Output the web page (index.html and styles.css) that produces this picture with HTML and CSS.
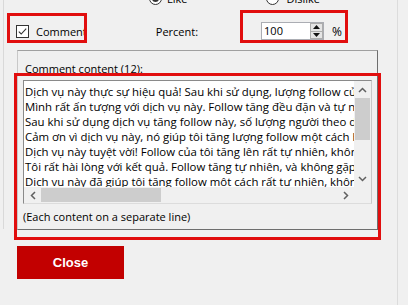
FILE: index.html
```html
<!DOCTYPE html>
<html lang="vi">
<head>
<meta charset="utf-8">
<title>Comment settings</title>
<link rel="stylesheet" href="styles.css">
</head>
<body>
<div class="window">
  <div class="upper">
    <div class="radio-row">
      <span class="radio checked"></span><span class="radio-label">Like</span>
      <span class="radio second"></span><span class="radio-label">Dislike</span>
    </div>
    <div class="settings-row">
      <span class="checkbox">
        <svg width="13" height="13" viewBox="0 0 13 13"><rect x="0.5" y="0.5" width="12" height="12" fill="#fff" stroke="#333"/><polyline points="2.8,6.6 5.2,9 10.2,3.6" fill="none" stroke="#333" stroke-width="1.1"/></svg>
      </span>
      <span class="check-label">Comment</span>
      <span class="percent-label">Percent:</span>
      <span class="spin">
        <span class="spin-value">100</span>
        <span class="spin-buttons">
          <span class="spin-btn"><svg width="7" height="4" viewBox="0 0 7 4"><polygon points="0,4 3.5,0 7,4" fill="#111"/></svg></span>
          <span class="spin-btn"><svg width="7" height="4" viewBox="0 0 7 4"><polygon points="0,0 3.5,4 7,0" fill="#111"/></svg></span>
        </span>
      </span>
      <span class="percent-sign">%</span>
    </div>
    <div class="group">
      <div class="group-label">Comment content (12):</div>
      <div class="textbox">
        <div class="text-view">
          <div class="lines">
            <div>Dịch vụ này thực sự hiệu quả! Sau khi sử dụng, lượng follow của tôi tăng lên đáng kể.</div>
            <div>Mình rất ấn tượng với dịch vụ này. Follow tăng đều đặn và tự nhiên, rất đáng tiền.</div>
            <div>Sau khi sử dụng dịch vụ tăng follow này, số lượng người theo dõi của tôi tăng nhanh.</div>
            <div>Cảm ơn vì dịch vụ này, nó giúp tôi tăng lượng follow một cách hiệu quả và an toàn.</div>
            <div>Dịch vụ này tuyệt vời! Follow của tôi tăng lên rất tự nhiên, không có dấu hiệu bất thường.</div>
            <div>Tôi rất hài lòng với kết quả. Follow tăng tự nhiên, và không gặp bất kỳ vấn đề gì.</div>
            <div>Dịch vụ này đã giúp tôi tăng follow một cách rất tự nhiên, không bị tụt giảm.</div>
            <div>Tốc độ tăng follow rất nhanh, hỗ trợ nhiệt tình, tôi sẽ tiếp tục ủng hộ.</div>
            <div>Giá cả hợp lý, follow tăng ổn định, tài khoản của tôi trông uy tín hơn hẳn.</div>
            <div>Lần đầu dùng thử nhưng kết quả vượt ngoài mong đợi, cảm ơn đội ngũ hỗ trợ.</div>
            <div>Follow thật, tương tác tốt, tôi sẽ giới thiệu dịch vụ này cho bạn bè.</div>
            <div>Dịch vụ chuyên nghiệp, giao hàng đúng hẹn và follow không bị tụt.</div>
          </div>
          <div class="vscroll">
            <span class="arrow"><svg width="9" height="6" viewBox="0 0 9 6"><polyline points="1,5 4.5,1.5 8,5" fill="none" stroke="#606060" stroke-width="1.5"/></svg></span>
            <span class="vtrack"><span class="vthumb"></span></span>
            <span class="arrow"><svg width="9" height="6" viewBox="0 0 9 6"><polyline points="1,1 4.5,4.5 8,1" fill="none" stroke="#606060" stroke-width="1.5"/></svg></span>
          </div>
        </div>
        <div class="hscroll">
          <span class="arrow"><svg width="6" height="9" viewBox="0 0 6 9"><polyline points="5,1 1.5,4.5 5,8" fill="none" stroke="#606060" stroke-width="1.5"/></svg></span>
          <span class="htrack"><span class="hthumb"></span></span>
          <span class="arrow"><svg width="6" height="9" viewBox="0 0 6 9"><polyline points="1,1 4.5,4.5 1,8" fill="none" stroke="#606060" stroke-width="1.5"/></svg></span>
          <span class="corner"></span>
        </div>
      </div>
      <div class="hint">(Each content on a separate line)</div>
    </div>
  </div>
  <div class="actions">
    <button class="close-btn">Close</button>
  </div>
  <div class="mark mark-comment"></div>
  <div class="mark mark-percent"></div>
  <div class="mark mark-content"></div>
</div>
</body>
</html>
```

FILE: styles.css
```css
* { box-sizing: border-box; }
html, body { margin: 0; padding: 0; }
body {
  background: #f0f0f0;
  font-family: "Open Sans", "Noto Sans", sans-serif;
  font-size: 11px;
  color: #000;
}
.window {
  position: relative;
  width: 398px;
  height: 305px;
  border-right: 1px solid #dcdcdc;
  overflow: hidden;
}
.upper {
  margin-left: 3px;
  height: 237px;
  border-left: 1px solid #d9d9d9;
}
.radio-row {
  display: flex;
  align-items: center;
  height: 13px;
  margin-top: -8px;
}
.radio {
  width: 13px;
  height: 13px;
  border: 1px solid #333;
  border-radius: 50%;
  background: #fff;
  display: flex;
  align-items: center;
  justify-content: center;
  margin-left: 145px;
}
.radio.checked::after {
  content: "";
  width: 7px;
  height: 7px;
  border-radius: 50%;
  background: #333;
}
.radio.second { margin-left: 79px; }
.radio-label { margin-left: 5px; line-height: 15px; }
.radio.second + .radio-label { margin-left: 7px; }

.settings-row {
  display: flex;
  align-items: center;
  height: 18px;
  margin-top: 17px;
}
.checkbox { display: flex; margin-left: 12px; }
.check-label { margin-left: 7px; }
.percent-label { margin-left: 69px; }
.spin {
  display: flex;
  margin-left: 63px;
  width: 63px;
  height: 18px;
  background: #fff;
  border: 1px solid #abadb3;
}
.spin-value {
  flex: 1;
  padding-left: 2px;
  line-height: 16px;
}
.spin-buttons {
  display: flex;
  flex-direction: column;
  width: 13px;
  margin: 0;
}
.spin-btn {
  flex: 1;
  display: flex;
  align-items: center;
  justify-content: center;
  background: #e5e5e5;
  border: 1px solid #adadad;
}
.spin-btn + .spin-btn { border-top: none; }
.percent-sign { margin-left: 8px; font-size: 12px; }

.group {
  margin: 10px 0 0 13px;
  width: 361px;
  height: 180px;
  border: 1px solid;
  border-color: #a0a0a0 #6e6e6e #6e6e6e #c8c8c8;
  padding: 10px 5px 0 5px;
}
.group-label { line-height: 15px; padding-left: 2px; }
.textbox {
  margin-top: 4px;
  width: 349px;
  height: 124px;
  border: 1px solid #8a8a8a;
  border-right-color: #c8c8c8;
  border-bottom-color: #dcdcdc;
  background: #fff;
  display: flex;
  flex-direction: column;
}
.text-view {
  display: flex;
  height: 106px;
}
.lines {
  flex: 1;
  overflow: hidden;
  white-space: nowrap;
  padding: 3px 0 0 1px;
  line-height: 15px;
  font-size: 11.4px;
}
.vscroll {
  width: 17px;
  display: flex;
  flex-direction: column;
  background: #f0f0f0;
}
.arrow {
  flex: 0 0 17px;
  display: flex;
  align-items: center;
  justify-content: center;
}
.vtrack { flex: 1; padding: 0 1px 0 1px; }
.vthumb {
  display: block;
  height: 42px;
  background: #cdcdcd;
}
.hscroll {
  display: flex;
  height: 17px;
  background: #f0f0f0;
}
.htrack { flex: 1; padding: 1px 0; }
.hthumb {
  display: block;
  width: 120px;
  height: 100%;
  background: #cdcdcd;
}
.corner { width: 17px; background: #f0f0f0; }
.hint { margin-top: 5px; line-height: 15px; }

.actions { padding: 17px 0 0 17px; }
.close-btn {
  width: 107px;
  height: 33px;
  border: none;
  background: #c20000;
  color: #fff;
  font-family: "Liberation Sans", Arial, sans-serif;
  font-weight: bold;
  font-size: 13px;
  padding: 0;
}

.mark {
  position: absolute;
  border: 3px solid #e10e0e;
}
.mark-comment { left: 7px; top: 13px; width: 80px; height: 30px; }
.mark-percent { left: 240px; top: 10px; width: 108px; height: 33px; }
.mark-content { left: 14px; top: 73px; width: 367px; height: 167px; }
```
